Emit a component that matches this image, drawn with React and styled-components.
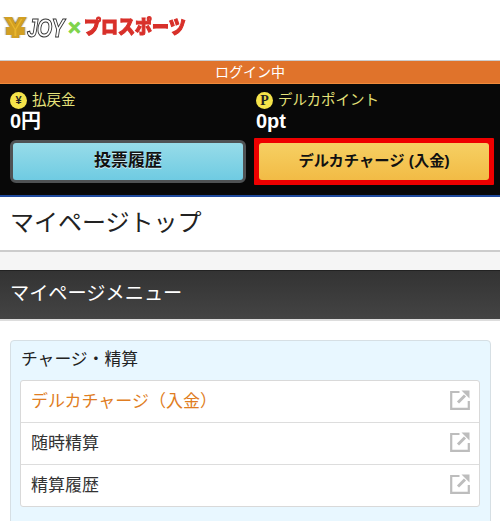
import styled, { createGlobalStyle } from "styled-components";

const GlobalStyle = createGlobalStyle`
    html, body {
        margin: 0;
        padding: 0;
        background: #fff;
        overflow: hidden;
    }
    * {
        box-sizing: border-box;
    }
`;

const font = `"Liberation Sans", "Noto Sans CJK JP", sans-serif`;

const Page = styled.div`
    width: 500px;
    height: 521px;
    overflow: hidden;
    font-family: ${font};
    color: #222;
`;

const Header = styled.header`
    height: 60px;
    padding: 15px 0 0 6px;
    display: flex;
    align-items: flex-start;
    background: #fff;
`;

const LogoYen = styled.span`
    display: block;
    width: 21px;
    font-size: 27px;
    line-height: 26px;
    font-weight: 900;
    color: #e8b62e;
    -webkit-text-stroke: 2px #d29f22;
    filter: drop-shadow(0 0 0.7px #4a3a10);
    transform: scaleX(1.25);
    transform-origin: left center;
`;

const LogoJoy = styled.span`
    display: block;
    width: 41px;
    font-size: 25px;
    line-height: 26px;
    font-weight: 700;
    font-style: italic;
    color: #fff;
    -webkit-text-stroke: 1.1px #333;
    letter-spacing: -1px;
    transform: scaleX(0.78);
    transform-origin: left center;
`;

const LogoCross = styled.span`
    display: block;
    width: 16px;
    font-size: 22px;
    line-height: 26px;
    font-weight: 900;
    color: #7ed44a;
    -webkit-text-stroke: 0.8px #7ed44a;
`;

const LogoSports = styled.span`
    display: block;
    font-size: 17px;
    line-height: 26px;
    font-weight: 900;
    color: #d8302a;
    -webkit-text-stroke: 1px #d8302a;
    transform: scaleY(1.12);
`;

const StatusBar = styled.div`
    height: 24px;
    border-top: 1px solid #ccc;
    border-bottom: 1px solid #f08a3a;
    background: #e0732b;
    color: #fff;
    font-size: 14px;
    line-height: 22px;
    text-align: center;
`;

const Account = styled.section`
    height: 111px;
    background: #080808;
    display: grid;
    grid-template-columns: 1fr 1fr;
`;

const AccountColumn = styled.div`
    display: flex;
    flex-direction: column;
    padding: ${({ $right }) => ($right ? "7px 6px 0 4px" : "7px 4px 0 10px")};
`;

const Label = styled.div`
    display: flex;
    align-items: center;
    gap: 5px;
    height: 18px;
    margin-left: ${({ $right }) => ($right ? "2px" : "0")};
    font-size: 14.5px;
    line-height: 18px;
    color: #e6e27a;
`;

const Coin = styled.span`
    flex: none;
    width: 17px;
    height: 17px;
    border-radius: 50%;
    background: #f5e34a;
    color: #222;
    font-size: ${({ $serif }) => ($serif ? "14px" : "11px")};
    font-weight: 700;
    font-family: ${({ $serif }) =>
        $serif ? `"Liberation Serif", serif` : font};
    line-height: 17px;
    text-align: center;
`;

const Amount = styled.div`
    height: 24px;
    margin-left: ${({ $right }) => ($right ? "2px" : "0")};
    font-size: 20px;
    line-height: 24px;
    font-weight: 700;
    color: #fff;
`;

const BlueButton = styled.div`
    height: 43px;
    margin-top: 7px;
    border: 3px solid #4f5254;
    border-radius: 6px;
    background: linear-gradient(#97dce9, #6fcbe2);
    color: #111;
    font-size: 17px;
    font-weight: 700;
    line-height: 36px;
    text-align: center;
    text-shadow: 0 1px 0 rgba(255, 255, 255, 0.7);
`;

const ChargeFrame = styled.div`
    height: 47px;
    margin-top: 5px;
    padding: 5px;
    background: #ee0000;
    border-radius: 1px;
`;

const ChargeButton = styled.div`
    height: 37px;
    border-radius: 3px;
    background: linear-gradient(#f6d063, #f2bb45);
    color: #111;
    font-size: 15.3px;
    font-weight: 700;
    line-height: 36px;
    text-align: center;
`;

const BlueRule = styled.div`
    height: 2px;
    background: #1f4a9e;
`;

const PageTitle = styled.h1`
    margin: 0;
    height: 55px;
    padding: 0 0 0 10px;
    border-bottom: 2px solid #ccc;
    background: #fff;
    color: #222;
    font-size: 24px;
    font-weight: 400;
    line-height: 51px;
`;

const Spacer = styled.div`
    height: 18px;
    background: #f5f5f5;
`;

const SectionBar = styled.h2`
    margin: 0;
    height: 51px;
    padding-left: 10px;
    border-top: 1px solid #222;
    border-bottom: 2px solid #ddd;
    background: linear-gradient(#333, #444);
    color: #fff;
    font-size: 19.2px;
    font-weight: 400;
    line-height: 46px;
`;

const Content = styled.main`
    padding: 19px 9px 0 10px;
    background: #fff;
`;

const Panel = styled.section`
    height: 200px;
    padding: 0 10px 0 9px;
    border: 1px solid #d6dfe4;
    border-radius: 4px;
    background: #e8f7ff;
`;

const PanelTitle = styled.h3`
    margin: 0;
    height: 39px;
    padding-left: 1px;
    color: #222;
    font-size: 16.8px;
    font-weight: 400;
    line-height: 37px;
`;

const MenuList = styled.ul`
    margin: 0;
    padding: 0;
    list-style: none;
    background: #fff;
    border: 1px solid #d9d9d9;
    border-radius: 3px;
`;

const MenuRow = styled.li`
    height: ${({ $first }) => ($first ? "41px" : "42px")};
    padding: 0 9px 0 10px;
    display: flex;
    align-items: center;
    justify-content: space-between;
    border-top: ${({ $first }) => ($first ? "none" : "1px solid #ddd")};
    color: ${({ $accent }) => ($accent ? "#e07d22" : "#333")};
    font-size: 17px;
    line-height: 24px;
`;

const IconSvg = styled.svg`
    margin-bottom: 4px;
`;

const ExternalIcon = () => (
    <IconSvg width="20" height="20" viewBox="0 0 20 20" fill="none">
        <path d="M9.5 2H1.2V18.8H18.8V11" stroke="#bdbdbd" strokeWidth="2.2" />
        <path d="M8 12.5 L15 5.5" stroke="#bdbdbd" strokeWidth="3" />
        <path d="M11.5 0.5H19.5V8.5Z" fill="#bdbdbd" />
    </IconSvg>
);

const menu = [
    { id: 0, title: "デルカチャージ（入金）", accent: true },
    { id: 1, title: "随時精算" },
    { id: 2, title: "精算履歴" },
];

const App = () => {
    return (
        <Page>
            <GlobalStyle />
            <Header>
                <LogoYen>¥</LogoYen>
                <LogoJoy>JOY</LogoJoy>
                <LogoCross>×</LogoCross>
                <LogoSports>プロスポーツ</LogoSports>
            </Header>
            <StatusBar>ログイン中</StatusBar>
            <Account>
                <AccountColumn>
                    <Label>
                        <Coin>¥</Coin>
                        払戻金
                    </Label>
                    <Amount>0円</Amount>
                    <BlueButton>投票履歴</BlueButton>
                </AccountColumn>
                <AccountColumn $right>
                    <Label $right>
                        <Coin $serif>P</Coin>
                        デルカポイント
                    </Label>
                    <Amount $right>0pt</Amount>
                    <ChargeFrame>
                        <ChargeButton>デルカチャージ (入金)</ChargeButton>
                    </ChargeFrame>
                </AccountColumn>
            </Account>
            <BlueRule />
            <PageTitle>マイページトップ</PageTitle>
            <Spacer />
            <SectionBar>マイページメニュー</SectionBar>
            <Content>
                <Panel>
                    <PanelTitle>チャージ・精算</PanelTitle>
                    <MenuList>
                        {menu.map((item, index) => (
                            <MenuRow
                                key={item.id}
                                $first={index === 0}
                                $accent={item.accent}
                            >
                                {item.title}
                                <ExternalIcon />
                            </MenuRow>
                        ))}
                    </MenuList>
                </Panel>
            </Content>
        </Page>
    );
};

export default App;
